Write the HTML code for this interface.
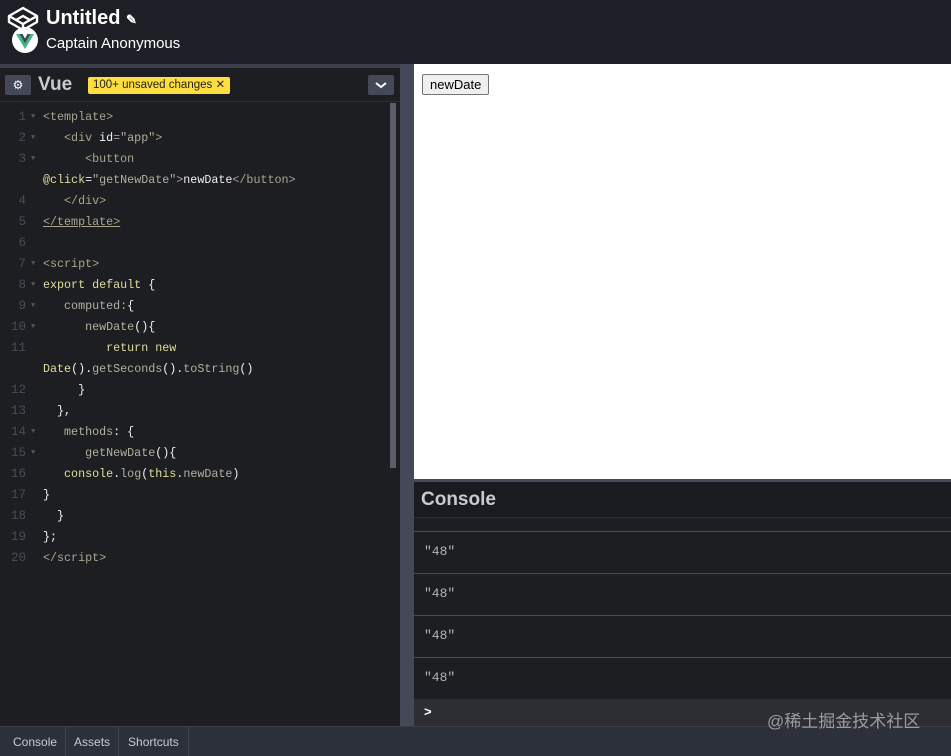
<!DOCTYPE html>
<html><head><meta charset="utf-8"><style>
*{margin:0;padding:0;box-sizing:border-box}
body{width:951px;height:756px;overflow:hidden;background:#1e1f26;font-family:"Liberation Sans","Noto Sans CJK SC",sans-serif;position:relative}
.abs{position:absolute}
.code{font-family:"Liberation Mono","Noto Sans CJK SC",monospace;font-size:11.7px;}
.ln{position:absolute;left:0;width:26px;text-align:right;color:#4a4c55;font-size:12.5px;font-family:"Liberation Mono",monospace}
.cl{position:absolute;left:43px;white-space:pre;color:#c8c8b4;top:0}
.t{color:#a8a58c}.k{color:#e0dc9c}.w{color:#f0f0f0}.g{color:#b0b0a0}
.fold{position:absolute;left:31px;color:#555;font-size:7px}
.row{position:absolute;left:414px;width:537px;height:42px;border-top:1px solid #4a4c55;background:#1d1e22}
.row span{position:absolute;left:10px;top:12px;color:#b4b4b4;font-family:"Liberation Mono",monospace;font-size:13px}
</style></head><body>
<div class="abs" style="left:0;top:0;width:951px;height:64px;background:#1e1f26"></div>
<svg class="abs" style="left:7px;top:6px" width="32" height="26" viewBox="0 0 32 26"><g fill="none" stroke="#fff" stroke-width="2.4" stroke-linejoin="round"><path d="M16 2 L30 10 L16 18 L2 10 Z"/><path d="M2 10 L2 16 L16 24 L30 16 L30 10"/><path d="M16 18 L16 24 M9 14 L16 10 L23 14"/></g></svg>
<svg class="abs" style="left:11px;top:26px" width="28" height="28" viewBox="0 0 28 28"><circle cx="14" cy="14" r="13" fill="#fff"/><path d="M5 8 L14 23 L23 8 L19.5 8 L14 17.5 L8.5 8Z" fill="#41b883"/><path d="M8.5 8 L14 17.5 L19.5 8 L16.5 8 L14 12.5 L11.5 8Z" fill="#34495e"/></svg>
<div class="abs" style="left:46px;top:7px;color:#fff;font-size:20px;font-weight:bold">Untitled <span style="font-size:13px">✎</span></div>
<div class="abs" style="left:46px;top:35px;color:#fff;font-size:15px">Captain Anonymous</div>
<div class="abs" style="left:0;top:64px;width:414px;height:4px;background:#3d3f4a"></div>
<div class="abs" style="left:0;top:68px;width:400px;height:658px;background:#1d1e22"></div>
<div class="abs" style="left:0;top:101px;width:400px;height:1px;background:#2c2e34"></div>
<div class="abs" style="left:5px;top:75px;width:26px;height:20px;background:#444857;border-radius:2px;color:#fff;font-size:12px;text-align:center;line-height:20px">⚙</div>
<div class="abs" style="left:38px;top:74px;color:#c8cad0;font-size:19px;font-weight:bold">Vue</div>
<div class="abs" style="left:88px;top:77px;height:17px;padding:0 5px;background:#ffdd40;border-radius:2px;color:#222;font-size:11.5px;line-height:17px">100+ unsaved changes ✕</div>
<div class="abs" style="left:368px;top:75px;width:26px;height:20px;background:#444857;border-radius:2px"><svg width="26" height="20"><path d="M8 8 L13 12 L18 8" stroke="#fff" stroke-width="2" fill="none"/></svg></div>
<div class="abs" style="left:390px;top:103px;width:6px;height:365px;background:#5a5e6a"></div>
<div class="abs" style="left:400px;top:64px;width:14px;height:662px;background:#444857"></div>
<div class="code">
<div class="ln" style="top:110px">1</div><div class="fold" style="top:113px">▼</div><div class="cl t" style="top:110px">&lt;template&gt;</div>
<div class="ln" style="top:131px">2</div><div class="fold" style="top:134px">▼</div><div class="cl t" style="top:131px">   &lt;div <span class="w">id</span>=<span class="g">"app"</span>&gt;</div>
<div class="ln" style="top:152px">3</div><div class="fold" style="top:155px">▼</div><div class="cl t" style="top:152px">      &lt;button</div>
<div class="cl" style="top:173px"><span class="k">@click</span><span class="w">=</span><span class="g">"getNewDate"</span><span class="t">&gt;</span><span class="w">newDate</span><span class="t">&lt;/button&gt;</span></div>
<div class="ln" style="top:194px">4</div><div class="cl t" style="top:194px">   &lt;/div&gt;</div>
<div class="ln" style="top:215px">5</div><div class="cl t" style="top:215px;text-decoration:underline">&lt;/template&gt;</div>
<div class="ln" style="top:236px">6</div>
<div class="ln" style="top:257px">7</div><div class="fold" style="top:260px">▼</div><div class="cl t" style="top:257px">&lt;script&gt;</div>
<div class="ln" style="top:278px">8</div><div class="fold" style="top:281px">▼</div><div class="cl k" style="top:278px">export default <span class="w">{</span></div>
<div class="ln" style="top:299px">9</div><div class="fold" style="top:302px">▼</div><div class="cl g" style="top:299px">   computed:<span class="w">{</span></div>
<div class="ln" style="top:320px">10</div><div class="fold" style="top:323px">▼</div><div class="cl g" style="top:320px">      newDate<span class="w">(){</span></div>
<div class="ln" style="top:341px">11</div><div class="cl k" style="top:341px">         return new</div>
<div class="cl" style="top:362px"><span class="k">Date</span><span class="w">().</span><span class="g">getSeconds</span><span class="w">().</span><span class="g">toString</span><span class="w">()</span></div>
<div class="ln" style="top:383px">12</div><div class="cl w" style="top:383px">     }</div>
<div class="ln" style="top:404px">13</div><div class="cl w" style="top:404px">  },</div>
<div class="ln" style="top:425px">14</div><div class="fold" style="top:428px">▼</div><div class="cl g" style="top:425px">   methods<span class="w">: {</span></div>
<div class="ln" style="top:446px">15</div><div class="fold" style="top:449px">▼</div><div class="cl g" style="top:446px">      getNewDate<span class="w">(){</span></div>
<div class="ln" style="top:467px">16</div><div class="cl" style="top:467px">   <span class="k">console</span><span class="w">.</span><span class="g">log</span><span class="w">(</span><span class="k">this</span><span class="w">.</span><span class="g">newDate</span><span class="w">)</span></div>
<div class="ln" style="top:488px">17</div><div class="cl w" style="top:488px">}</div>
<div class="ln" style="top:509px">18</div><div class="cl w" style="top:509px">  }</div>
<div class="ln" style="top:530px">19</div><div class="cl w" style="top:530px">};</div>
<div class="ln" style="top:551px">20</div><div class="cl t" style="top:551px">&lt;/script&gt;</div>
</div>
<div class="abs" style="left:414px;top:64px;width:537px;height:415px;background:#fff"></div>
<div class="abs" style="left:422px;top:74px;height:21px;padding:0 7px;background:#efefef;border:1px solid #767676;border-radius:2px;font-size:13px;line-height:19px;color:#000">newDate</div>
<div class="abs" style="left:414px;top:479px;width:537px;height:3px;background:#444857"></div>
<div class="abs" style="left:414px;top:482px;width:537px;height:35px;background:#1a1b20"></div>
<div class="abs" style="left:421px;top:489px;color:#c8cad0;font-size:19px;font-weight:bold">Console</div>
<div class="abs" style="left:414px;top:517px;width:537px;height:14px;background:#1d1e22;border-top:1px solid #2c2e34"></div>
<div class="row" style="top:531px"><span>"48"</span></div>
<div class="row" style="top:573px"><span>"48"</span></div>
<div class="row" style="top:615px"><span>"48"</span></div>
<div class="row" style="top:657px"><span>"48"</span></div>
<div class="abs" style="left:414px;top:699px;width:537px;height:27px;background:#2c2e33"><span style="position:absolute;left:10px;top:5px;color:#fff;font-weight:bold;font-size:13px">&gt;</span></div>
<div class="abs" style="left:0;top:726px;width:951px;height:30px;background:#2c303a;border-top:1px solid #3d404a"></div>
<div class="abs" style="left:0;top:727px;height:29px;font-size:12px;color:#c8cad0;display:flex">
<div style="padding:8px 8px 0 13px;border-right:1px solid #3f4350">Console</div>
<div style="padding:8px 8px 0 8px;border-right:1px solid #3f4350">Assets</div>
<div style="padding:8px 9px 0 9px;border-right:1px solid #3f4350">Shortcuts</div>
</div>
<div class="abs" style="left:767px;top:711px;color:#9a9ca4;font-size:17px;line-height:22px;z-index:5;white-space:nowrap">@稀土掘金技术社区</div>
</body></html>
